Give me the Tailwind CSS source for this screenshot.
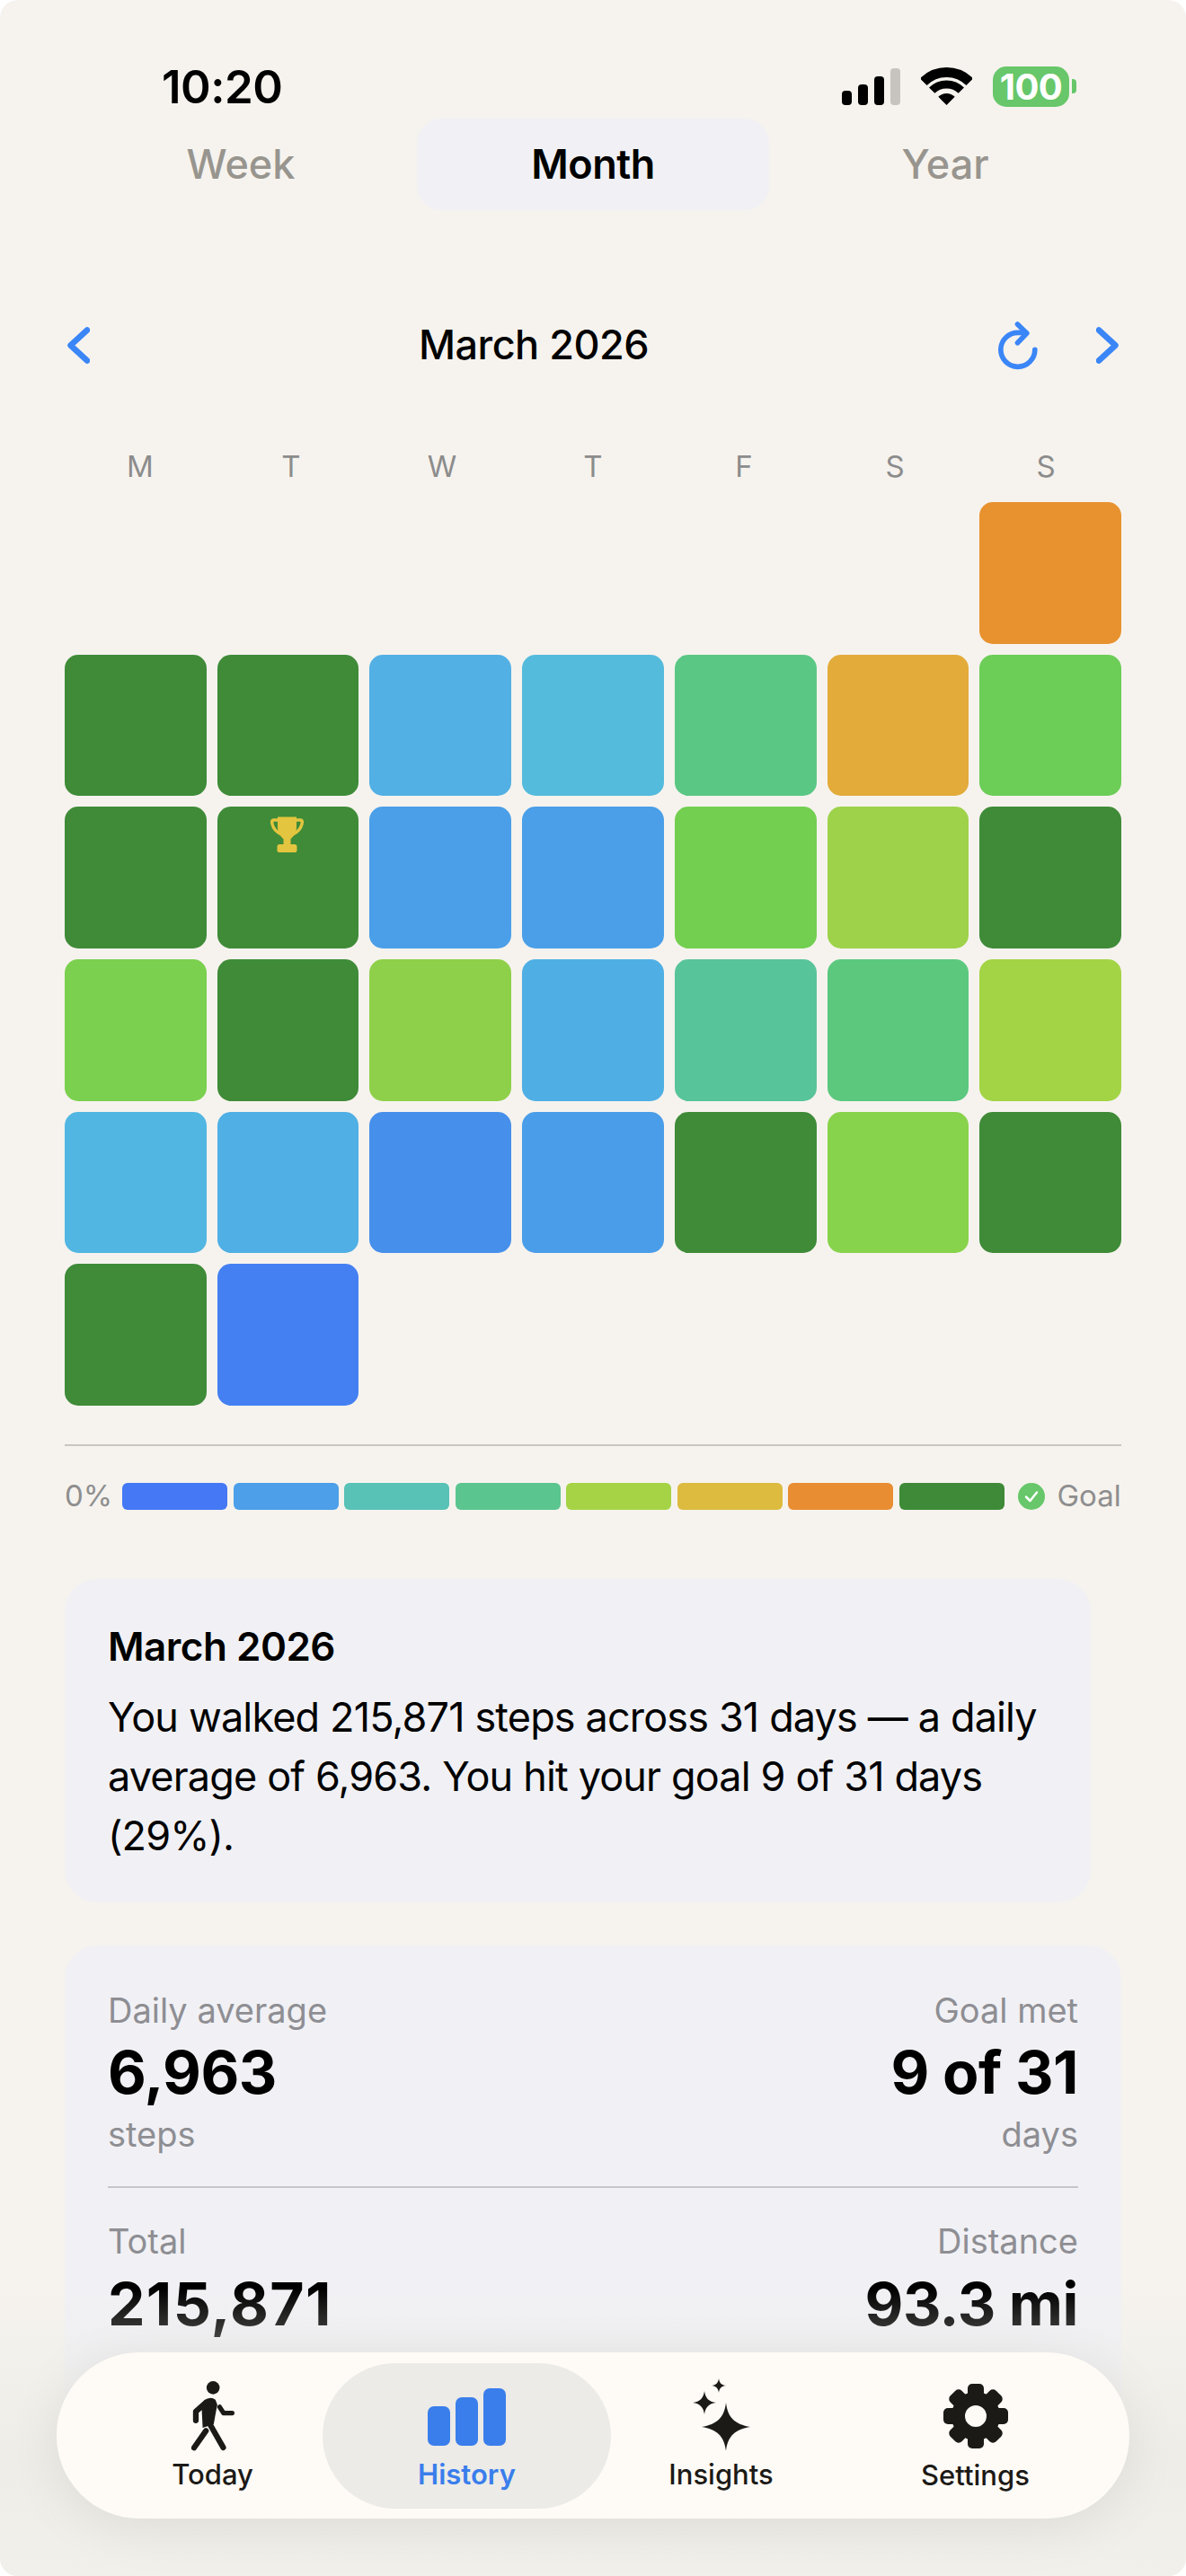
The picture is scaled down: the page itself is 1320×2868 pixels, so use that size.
<!DOCTYPE html>
<html lang="en">
<head>
  <meta charset="UTF-8" />
  <title>History</title>
  <script src="https://cdn.jsdelivr.net/npm/@tailwindcss/browser@4"></script>
</head>
<body class="bg-white font-['Inter',sans-serif]">
  <div class="relative w-[1320px] h-[2868px] overflow-hidden rounded-[20px] bg-[#f6f3ee] flex flex-col">

    <!-- Status bar -->
    <div class="h-[132px] flex shrink-0 justify-between pl-[180px] pr-[122px] pt-[72px]">
      <span class="text-[51px] leading-[50px] font-semibold text-black tracking-[-0.5px]">10:20</span>
      <div class="flex items-start">
        <svg class="mt-[4px]" width="65" height="41" viewBox="0 0 65 41">
          <rect x="0" y="25" width="11" height="16" rx="4" fill="#000"/>
          <rect x="18" y="18" width="11" height="23" rx="4" fill="#000"/>
          <rect x="36" y="9" width="11" height="32" rx="4" fill="#000"/>
          <rect x="54" y="0" width="11" height="41" rx="4" fill="#c7c4c0"/>
        </svg>
        <svg class="ml-[23px] mt-[3px]" width="57" height="42" viewBox="0 0 57 42" fill="none" stroke="#000">
          <path d="M2.7 16.2A36.5 36.5 0 0 1 54.3 16.2" stroke-width="11"/>
          <path d="M12.2 25.7A23 23 0 0 1 44.8 25.7" stroke-width="9"/>
          <path d="M28.5 42L19.3 32.8A13 13 0 0 1 37.7 32.8Z" fill="#000" stroke="none"/>
        </svg>
        <div class="ml-[23px] mt-[2px] w-[85px] h-[45px] rounded-[15px] bg-[#67c76a] text-white text-[40px] leading-[45px] font-bold text-center tracking-[-0.5px]">100</div>
        <div class="ml-[3px] mt-[16px] w-[5px] h-[16px] rounded-r-[4px] bg-[#67c76a]"></div>
      </div>
    </div>

    <!-- Range tabs -->
    <div class="grid grid-cols-3 shrink-0 h-[102px] px-[72px] text-[45px] font-medium">
      <div class="flex items-center justify-center text-[#98958f]">Week</div>
      <div class="flex items-center justify-center text-black bg-[#f1f1f5] rounded-[27px] font-semibold tracking-[-0.5px]">Month</div>
      <div class="flex items-center justify-center text-[#98958f]">Year</div>
    </div>

    <!-- Month nav -->
    <div class="flex items-center shrink-0 h-[60px] mt-[120px] pl-[75px] pr-[75px]">
      <svg width="25" height="41" viewBox="0 0 25 41" fill="none" stroke="#3b86f7" stroke-width="6.5" stroke-linecap="round" stroke-linejoin="round"><path d="M22 3.5L3.5 20.5L22 37.5"/></svg>
      <div class="flex-1 pr-[22px] text-center text-[45px] font-medium text-black tracking-[-0.5px]">March 2026</div>
      <svg width="47" height="55" viewBox="90 50 140 165" fill="none" stroke="#3b86f7" stroke-width="17" stroke-linecap="round" stroke-linejoin="round"><path d="M215 147A57 57 0 1 1 160 90L185 90"/><path d="M157 62L188 92L157 124"/></svg>
      <svg class="ml-[63px]" width="25" height="41" viewBox="0 0 25 41" fill="none" stroke="#3b86f7" stroke-width="6.5" stroke-linecap="round" stroke-linejoin="round"><path d="M3 3.5L21.5 20.5L3 37.5"/></svg>
    </div>

    <!-- Weekdays -->
    <div class="grid grid-cols-7 shrink-0 h-[40px] mt-[85px] mx-[72px] text-[33px] leading-[40px] text-center text-[#8c8c8c]">
      <span>M</span><span>T</span><span>W</span><span>T</span><span>F</span><span>S</span><span>S</span>
    </div>

    <!-- Calendar -->
    <div class="grid grid-cols-7 auto-rows-[157.7px] gap-[12px] shrink-0 mt-[20px] mx-[72px]">
      <div></div><div></div><div></div><div></div><div></div><div></div>
      <div class="rounded-[15px] bg-[#e8922f]"></div>

      <div class="rounded-[15px] bg-[#3f8b38]"></div>
      <div class="rounded-[15px] bg-[#3f8b38]"></div>
      <div class="rounded-[15px] bg-[#53b0e4]"></div>
      <div class="rounded-[15px] bg-[#55bbdc]"></div>
      <div class="rounded-[15px] bg-[#5bc784]"></div>
      <div class="rounded-[15px] bg-[#e2ab3a]"></div>
      <div class="rounded-[15px] bg-[#6ccd57]"></div>

      <div class="rounded-[15px] bg-[#3f8b38]"></div>
      <div class="rounded-[15px] bg-[#3f8b38] flex justify-center pt-[11px]">
        <svg class="-ml-[3px]" width="37" height="40" viewBox="0 0 37 40">
          <path d="M8 0.5H29V12C29 19 25 23 22.5 25V31H27C28.5 31 29.5 32 29.5 33.5V38C29.5 39.3 28.5 40 27.5 40H9.5C8.5 40 7.5 39.3 7.5 38V33.5C7.5 32 8.5 31 10 31H14.5V25C12 23 8 19 8 12Z" fill="#e3c53f"/>
          <path d="M9 4H3.5C1.5 4 1.5 6 2 8.5C3 13 6 17 12 20M28 4H33.5C35.5 4 35.5 6 35 8.5C34 13 31 17 25 20" fill="none" stroke="#e3c53f" stroke-width="3.5"/>
        </svg>
      </div>
      <div class="rounded-[15px] bg-[#4a9fe8]"></div>
      <div class="rounded-[15px] bg-[#4a9fe8]"></div>
      <div class="rounded-[15px] bg-[#72cf50]"></div>
      <div class="rounded-[15px] bg-[#9dd24a]"></div>
      <div class="rounded-[15px] bg-[#3f8b38]"></div>

      <div class="rounded-[15px] bg-[#7bd04f]"></div>
      <div class="rounded-[15px] bg-[#3f8b38]"></div>
      <div class="rounded-[15px] bg-[#8fd04a]"></div>
      <div class="rounded-[15px] bg-[#4fafe4]"></div>
      <div class="rounded-[15px] bg-[#58c49a]"></div>
      <div class="rounded-[15px] bg-[#5bc87e]"></div>
      <div class="rounded-[15px] bg-[#a3d445]"></div>

      <div class="rounded-[15px] bg-[#52b6e2]"></div>
      <div class="rounded-[15px] bg-[#50afe5]"></div>
      <div class="rounded-[15px] bg-[#4690eb]"></div>
      <div class="rounded-[15px] bg-[#4a9de8]"></div>
      <div class="rounded-[15px] bg-[#3f8b38]"></div>
      <div class="rounded-[15px] bg-[#88d34c]"></div>
      <div class="rounded-[15px] bg-[#3f8b38]"></div>

      <div class="rounded-[15px] bg-[#3f8b38]"></div>
      <div class="rounded-[15px] bg-[#4480f2]"></div>
    </div>

    <div class="shrink-0 h-[2px] mt-[43px] mx-[72px] bg-[#c9c6c1]"></div>

    <!-- Legend -->
    <div class="flex items-center shrink-0 h-[30px] mt-[41px] mx-[72px] text-[33px] text-[#8e8e8e]">
      <span class="w-[64px]">0%</span>
      <div class="flex gap-[6.5px]">
        <div class="w-[117px] h-[30px] rounded-[6px] bg-[#4478f4]"></div>
        <div class="w-[117px] h-[30px] rounded-[6px] bg-[#4c9fe8]"></div>
        <div class="w-[117px] h-[30px] rounded-[6px] bg-[#58c2b6]"></div>
        <div class="w-[117px] h-[30px] rounded-[6px] bg-[#5bc58f]"></div>
        <div class="w-[117px] h-[30px] rounded-[6px] bg-[#a5d345]"></div>
        <div class="w-[117px] h-[30px] rounded-[6px] bg-[#dcbb3e]"></div>
        <div class="w-[117px] h-[30px] rounded-[6px] bg-[#e88d32]"></div>
        <div class="w-[117px] h-[30px] rounded-[6px] bg-[#3f8a38]"></div>
      </div>
      <svg class="ml-[15px]" width="30" height="30" viewBox="0 0 30 30"><circle cx="15" cy="15" r="15" fill="#67c76a"/><path d="M9 15.5L13.5 20L21 10.5" fill="none" stroke="#fff" stroke-width="2.5" stroke-linecap="round" stroke-linejoin="round"/></svg>
      <span class="ml-[14px]">Goal</span>
    </div>

    <!-- Summary -->
    <div class="shrink-0 w-[1142px] h-[360px] mt-[77px] ml-[72px] pl-[48px] pr-[30px] pt-[42px] rounded-[36px] bg-[#f1f1f5] text-black">
      <div class="text-[44px] leading-[66px] font-semibold tracking-[-0.5px]">March 2026</div>
      <p class="mt-[13px] text-[45px] leading-[66px] tracking-[-0.85px]">You walked 215,871 steps across 31 days — a daily average of 6,963. You hit your goal 9 of 31 days (29%).</p>
    </div>

    <!-- Stats -->
    <div class="shrink-0 flex-1 mt-[48px] mx-[72px] px-[48px] pt-[49px] rounded-t-[36px] bg-[#f1f1f5]">
      <div class="flex justify-between h-[221px] border-b-[2px] border-[#c6c6cb]">
        <div>
          <div class="text-[38px] leading-[46px] text-[#8e8e93]">Daily average</div>
          <div class="mt-[8px] text-[66px] leading-[76px] font-bold text-black tracking-[-0.5px]">6,963</div>
          <div class="mt-[8px] text-[38px] leading-[46px] text-[#8e8e93]">steps</div>
        </div>
        <div class="text-right">
          <div class="text-[38px] leading-[46px] text-[#8e8e93]">Goal met</div>
          <div class="mt-[8px] text-[66px] leading-[76px] font-bold text-black tracking-[-0.5px]">9 of 31</div>
          <div class="mt-[8px] text-[38px] leading-[46px] text-[#8e8e93]">days</div>
        </div>
      </div>
      <div class="flex justify-between pt-[36px]">
        <div>
          <div class="text-[38px] leading-[46px] text-[#8e8e93]">Total</div>
          <div class="mt-[9px] text-[66px] leading-[76px] font-bold text-black tracking-[1.3px]">215,871</div>
        </div>
        <div class="text-right">
          <div class="text-[38px] leading-[46px] text-[#8e8e93]">Distance</div>
          <div class="mt-[9px] text-[66px] leading-[76px] font-bold text-black tracking-[-0.5px]">93.3 mi</div>
        </div>
      </div>
    </div>

    <!-- Fade under tab bar -->
    <div class="absolute left-0 right-0 bottom-0 h-[320px] bg-gradient-to-b from-[#f6f3ee00] via-[#eeede8] via-60% to-[#f2f0eb]"></div>

    <!-- Tab bar -->
    <div class="absolute left-[63px] bottom-[64px] w-[1194px] h-[185px] pl-[32px] rounded-[92px] bg-[#fefbf6] shadow-[0_10px_60px_rgba(0,0,0,0.08)] grid grid-cols-[283px_283px_283px_283px] text-[31px] font-medium text-[#1c1a17]">
      <div class="flex flex-col items-center pt-[32px]">
        <svg class="h-[78px]" width="48" height="78" viewBox="97 33 145 235">
          <circle cx="170" cy="55" r="22" fill="#1c1a17"/>
          <path d="M140 98Q160 82 178 95L184 112L172 178L135 190L132 130Z" fill="#1c1a17"/>
          <path d="M146 105L112 135V165M155 170L204 256M146 200L106 257" fill="none" stroke="#1c1a17" stroke-width="19" stroke-linecap="round" stroke-linejoin="round"/>
          <path d="M192 120L205 140H234" fill="none" stroke="#1c1a17" stroke-width="16" stroke-linecap="round" stroke-linejoin="round"/>
        </svg>
        <span class="mt-[8px] leading-[36px]">Today</span>
      </div>
      <div class="relative flex flex-col items-center pt-[40px] text-[#3a7eec]">
        <div class="absolute left-[-19px] top-[12px] w-[321px] h-[162px] rounded-full bg-[#ecebe7]"></div>
        <div class="relative flex items-end gap-[6px] h-[64px]">
          <div class="w-[25px] h-[44px] rounded-[7px] bg-[#3a7eec]"></div>
          <div class="w-[25px] h-[54px] rounded-[7px] bg-[#3a7eec]"></div>
          <div class="w-[25px] h-[64px] rounded-[7px] bg-[#3a7eec]"></div>
        </div>
        <span class="relative mt-[14px] leading-[36px] font-semibold">History</span>
      </div>
      <div class="flex flex-col items-center pt-[29px]">
        <svg width="66" height="80" viewBox="0 0 66 80" fill="#1c1a17">
          <path transform="translate(38 54)" d="M0 -27C2 -10 10 -3 27 0C10 3 2 10 0 27C-2 10 -10 3 -27 0C-10 -3 -2 -10 0 -27Z"/>
          <path transform="translate(14 27)" d="M0 -13C1 -5 5 -1 13 0C5 1 1 5 0 13C-1 5 -5 1 -13 0C-5 -1 -1 -5 0 -13Z"/>
          <path transform="translate(30 8)" d="M0 -8C.6 -3 3 -.6 8 0C3 .6 .6 3 0 8C-.6 3 -3 .6 -8 0C-3 -.6 -.6 -3 0 -8Z"/>
        </svg>
        <span class="mt-[9px] leading-[36px]">Insights</span>
      </div>
      <div class="flex flex-col items-center pt-[35px]">
        <svg width="72" height="72" viewBox="0 0 72 72" fill="#1c1a17">
          <circle cx="36" cy="36" r="19.5" fill="none" stroke="#1c1a17" stroke-width="15"/>
          <rect x="27" y="0" width="18" height="16" rx="5"/>
          <rect x="27" y="0" width="18" height="16" rx="5" transform="rotate(45 36 36)"/>
          <rect x="27" y="0" width="18" height="16" rx="5" transform="rotate(90 36 36)"/>
          <rect x="27" y="0" width="18" height="16" rx="5" transform="rotate(135 36 36)"/>
          <rect x="27" y="0" width="18" height="16" rx="5" transform="rotate(180 36 36)"/>
          <rect x="27" y="0" width="18" height="16" rx="5" transform="rotate(225 36 36)"/>
          <rect x="27" y="0" width="18" height="16" rx="5" transform="rotate(270 36 36)"/>
          <rect x="27" y="0" width="18" height="16" rx="5" transform="rotate(315 36 36)"/>
        </svg>
        <span class="mt-[12px] leading-[36px]">Settings</span>
      </div>
    </div>
  </div>
</body>
</html>
